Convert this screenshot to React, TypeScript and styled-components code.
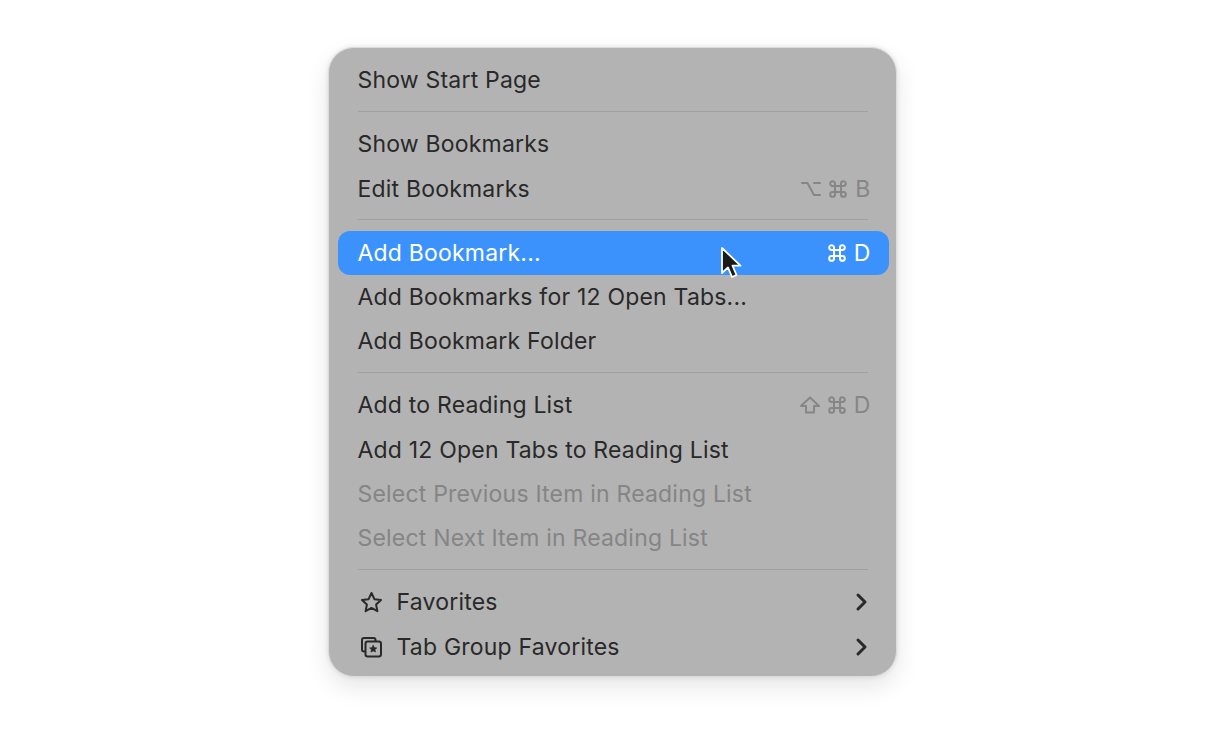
import React from "react";
import styled, { createGlobalStyle } from "styled-components";

const Global = createGlobalStyle`
  html, body { margin: 0; padding: 0; background: #fff; }
  body { font-family: Inter, "Liberation Sans", sans-serif; }
`;
const Page = styled.div`
  width: 1215px; height: 743px; display: flex; justify-content: center; align-items: flex-start;
  padding: 47px 0 0 10px; box-sizing: border-box; overflow: hidden; background: #fff;
`;
const Menu = styled.div`
  position: relative; width: 569px; height: 630px; box-sizing: border-box; padding: 10px 7.5px 0 8.5px;
  background: #b3b3b3; border: 1.5px solid #dcdcde; border-radius: 26px;
  box-shadow: 0 10px 24px rgba(0,0,0,0.1), 0 0 5px rgba(0,0,0,0.1);
`;
const Row = styled.div<{ $active?: boolean; $disabled?: boolean }>`
  height: 44.3px; box-sizing: border-box; padding: 0 18px 0 20px; display: flex; align-items: center;
  justify-content: space-between; font-size: 23px; letter-spacing: 0.2px; border-radius: 12px;
  color: ${p => p.$active ? "#ffffff" : p.$disabled ? "#858585" : "#292929"};
  background: ${p => p.$active ? "#3c92fd" : "transparent"};
`;
const Label = styled.span` display: flex; align-items: center; gap: 12px; white-space: nowrap; `;
const Separator = styled.div`
  height: 19.85px; box-sizing: border-box; padding: 0 21px 2px 20px; display: flex; align-items: center;
  &::after { content: ""; flex: 1; height: 1px; background: #a0a0a2; }
`;
const Shortcut = styled.span<{ $active?: boolean }>`
  display: flex; align-items: center; gap: 7px; color: ${p => p.$active ? "#fff" : "#868686"}; font-size: 23px;
`;
const IconSlot = styled.span` width: 27px; display: flex; justify-content: center; `;
const ChevronIcon = styled.svg` margin-right: 2px; `;
const Cursor = styled.svg` position: absolute; left: 390px; top: 198px; `;

const s = { fill: "none", stroke: "currentColor", strokeWidth: 2, strokeLinecap: "round" as const, strokeLinejoin: "round" as const };
const Cmd = () => (
  <svg width="20" height="20" viewBox="0 0 20 20" {...s}>
    <path d="M7 7h6v6H7zM7 7H4.600A2.400 2.400 0 1 1 7 4.600zM13 7V4.600A2.400 2.400 0 1 1 15.400 7zM13 13h2.400a2.400 2.400 0 1 1-2.400 2.400zM7 13v2.400A2.400 2.400 0 1 1 4.600 13z" />
  </svg>
);
const Opt = () => (
  <svg width="20" height="18" viewBox="0 0 20 18" {...s}><path d="M1 3h5.500l6.500 12h6M13 3h6" /></svg>
);
const Shift = () => (
  <svg width="20" height="18" viewBox="0 0 20 18" {...s}><path d="M10 1.500 19 10h-5v6.500H6V10H1z" /></svg>
);
const Star = () => (
  <svg width="23" height="22" viewBox="0 0 23 22" {...s}><path d="m11.500 2 2.900 6.200 6.600.8-4.900 4.600 1.300 6.600-5.900-3.300-5.900 3.300 1.300-6.600L2 9l6.600-.8z" /></svg>
);
const TabStar = () => (
  <svg width="23" height="22" viewBox="0 0 23 22" {...s}>
    <path d="M4.500 15.500H4a2 2 0 0 1-2-2V4a2 2 0 0 1 2-2h9.500a2 2 0 0 1 2 2v.5" />
    <rect x="5.500" y="5.500" width="15.500" height="15" rx="2.200" />
    <path d="m13.200 9.300 1.100 2.300 2.500.3-1.800 1.700.5 2.500-2.300-1.200-2.300 1.200.5-2.500-1.800-1.700 2.500-.3z" fill="currentColor" strokeWidth="0.6" />
  </svg>
);
const Chevron = () => (
  <ChevronIcon width="14" height="20" viewBox="0 0 14 20" fill="none" stroke="#292929" strokeWidth="3" strokeLinecap="round" strokeLinejoin="round"><path d="m3 3 7 7-7 7" /></ChevronIcon>
);

export default function App() {
  return (
    <Page>
      <Global />
      <Menu>
        <Row><Label>Show Start Page</Label></Row>
        <Separator />
        <Row><Label>Show Bookmarks</Label></Row>
        <Row><Label>Edit Bookmarks</Label><Shortcut><Opt /><Cmd /><span>B</span></Shortcut></Row>
        <Separator />
        <Row $active><Label>Add Bookmark...</Label><Shortcut $active><Cmd /><span>D</span></Shortcut></Row>
        <Row><Label>Add Bookmarks for 12 Open Tabs...</Label></Row>
        <Row><Label>Add Bookmark Folder</Label></Row>
        <Separator />
        <Row><Label>Add to Reading List</Label><Shortcut><Shift /><Cmd /><span>D</span></Shortcut></Row>
        <Row><Label>Add 12 Open Tabs to Reading List</Label></Row>
        <Row $disabled><Label>Select Previous Item in Reading List</Label></Row>
        <Row $disabled><Label>Select Next Item in Reading List</Label></Row>
        <Separator />
        <Row><Label><IconSlot><Star /></IconSlot>Favorites</Label><Chevron /></Row>
        <Row><Label><IconSlot><TabStar /></IconSlot>Tab Group Favorites</Label><Chevron /></Row>
        <Cursor width="24" height="34" viewBox="0 0 24 34">
          <path d="M3 2v25l6-5.500 4 9.500 4.500-2-4-9.300h8z" fill="#1a1a1a" stroke="#fff" strokeWidth="1.800" strokeLinejoin="round" />
        </Cursor>
      </Menu>
    </Page>
  );
}
